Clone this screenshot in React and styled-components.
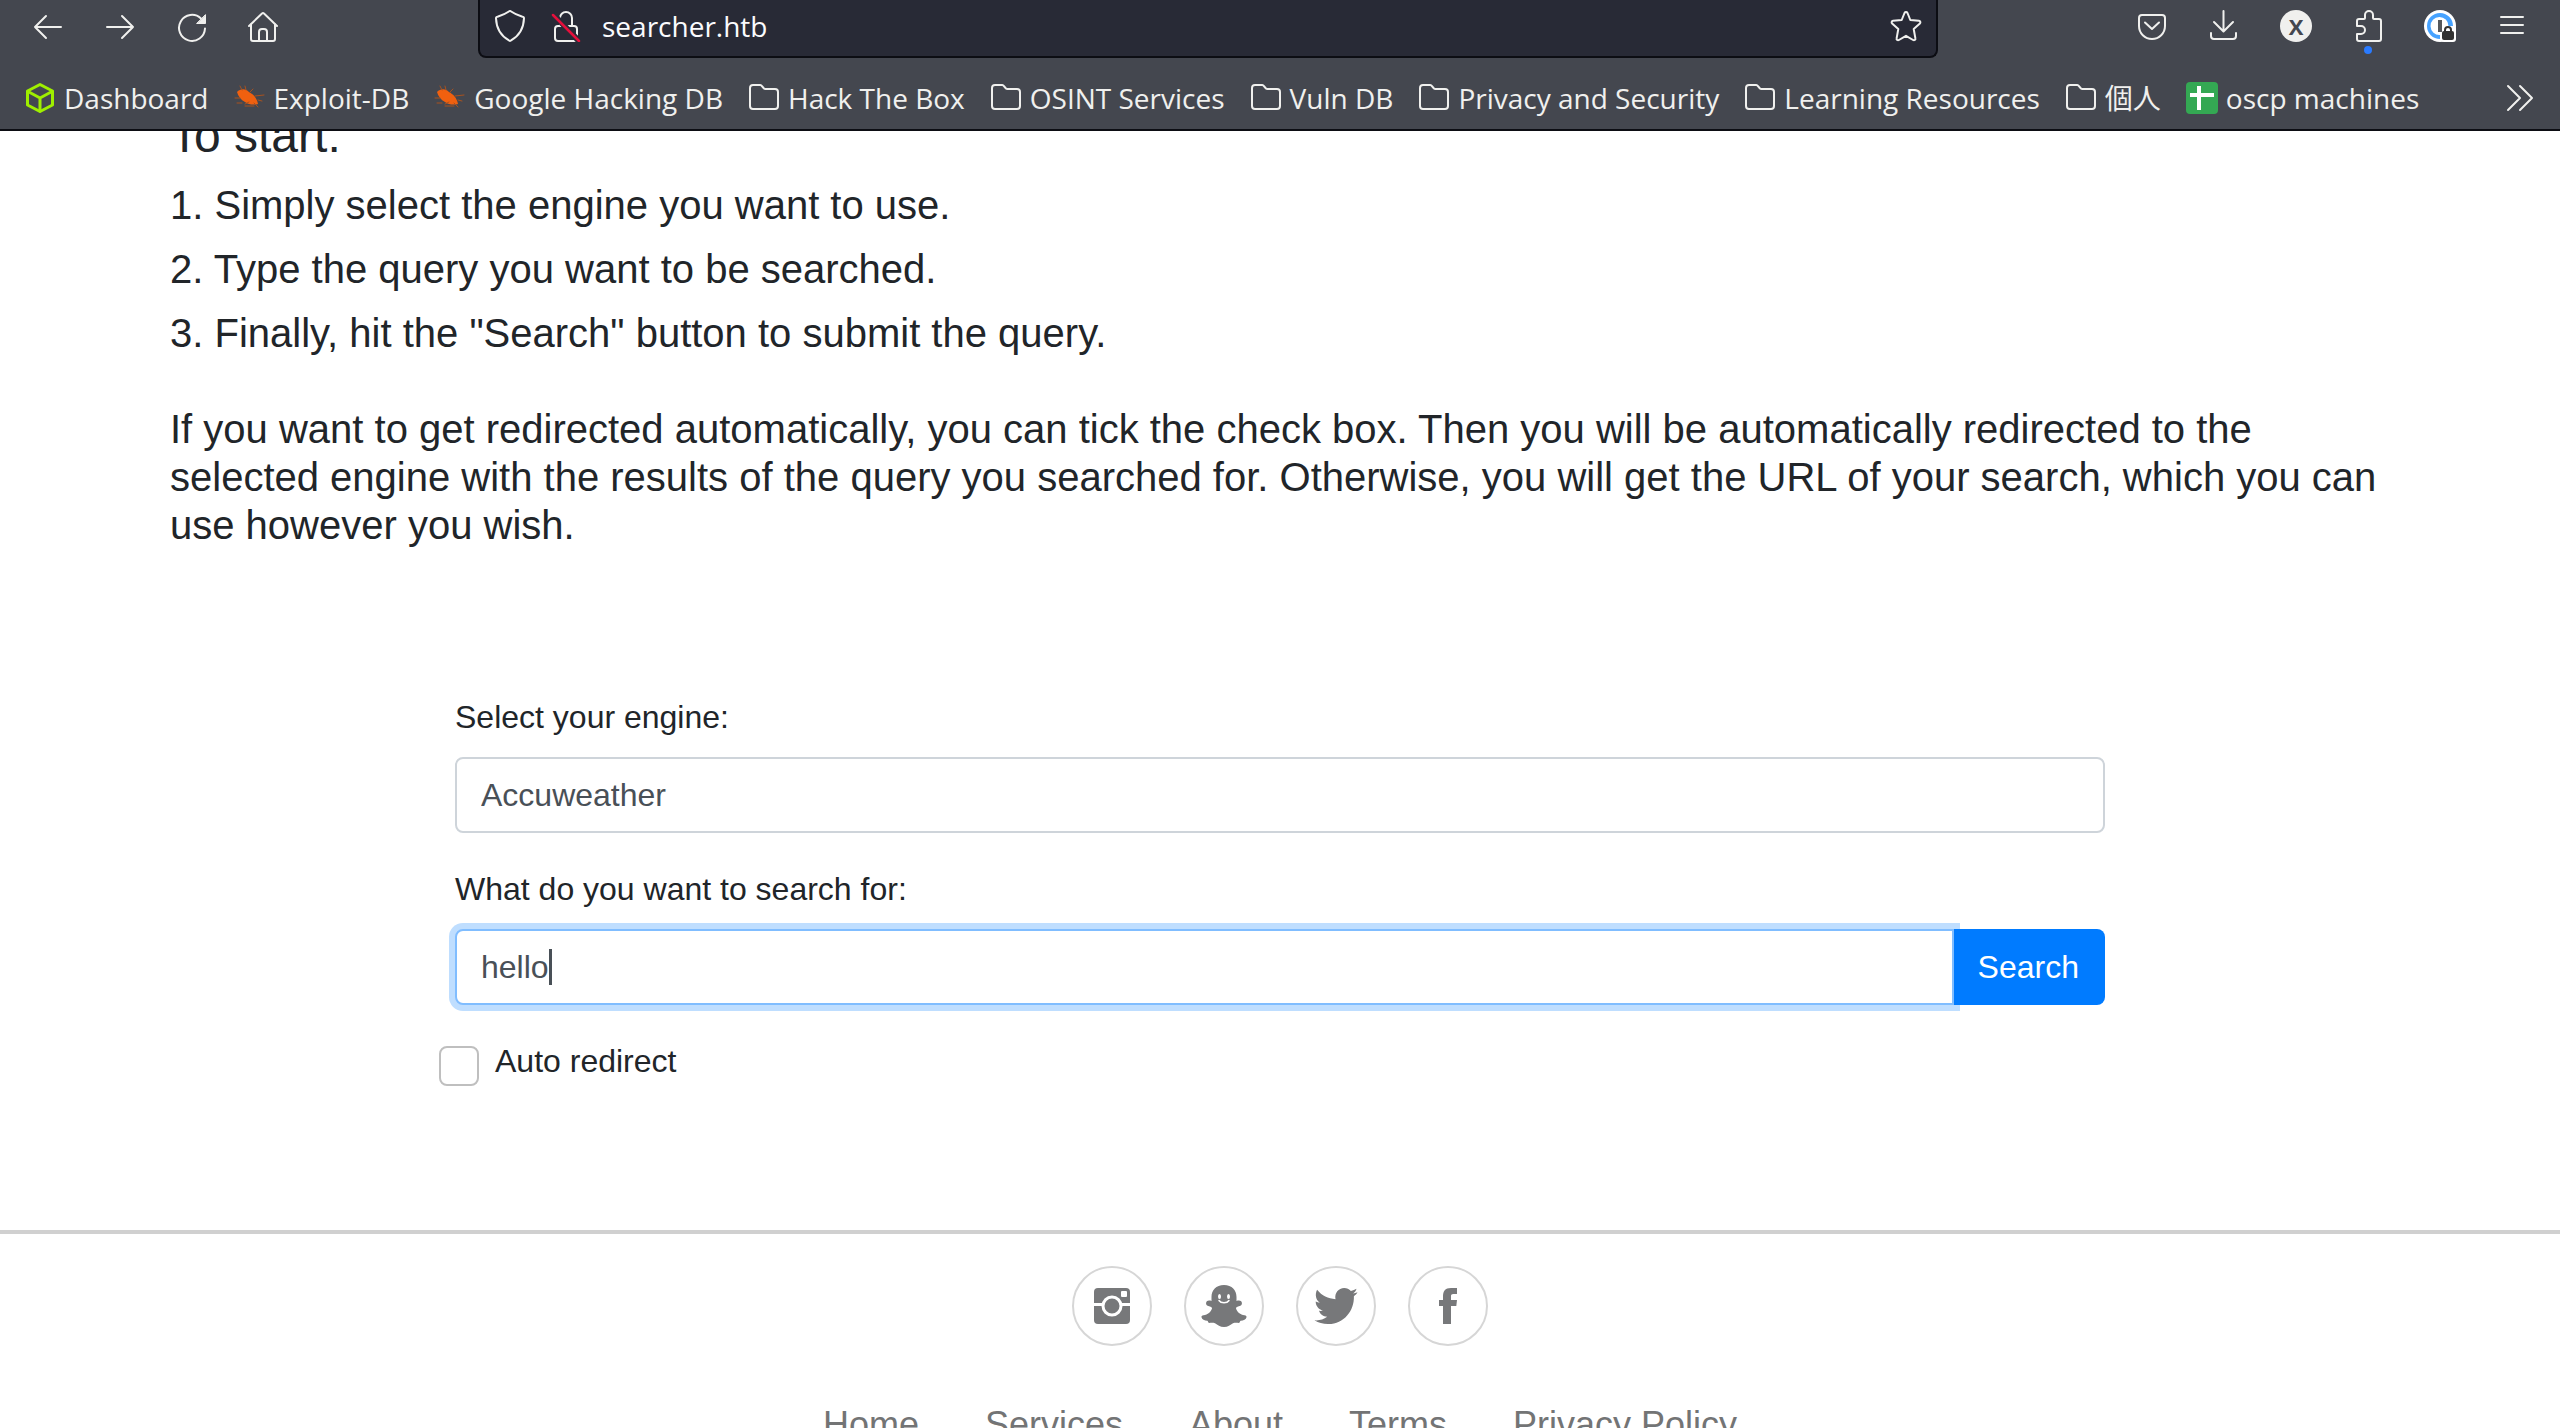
import React, { useState } from "react";
import styled, { createGlobalStyle, css } from "styled-components";

const GlobalStyle = createGlobalStyle`
  *, *::before, *::after { box-sizing: border-box; }
  body {
    margin: 0;
    background: #fff;
    color: #212529;
    font-family: "Liberation Sans", Arial, sans-serif;
    font-size: 32px;
    line-height: 48px;
  }
`;

const Screen = styled.div`
  display: flex;
  flex-direction: column;
  height: 100vh;
  overflow: hidden;
`;

/* Browser chrome */

const Chrome = styled.header`
  flex: none;
  background: #44474f;
  border-bottom: 2px solid #0c0d13;
  color: #f0f0ee;
  font-family: "Open Sans", "Noto Sans", "Noto Sans CJK JP", sans-serif;
  font-size: 28px;
  line-height: 40px;
`;

const Toolbar = styled.div`
  display: flex;
  align-items: flex-start;
  height: 67px;
  padding: 0 12px;
`;

const plainButton = css`
  border: 0;
  padding: 0;
  background: none;
  color: inherit;
  font: inherit;
  cursor: pointer;
`;

const ToolButton = styled.button`
  ${plainButton}
  position: relative;
  display: flex;
  align-items: center;
  justify-content: center;
  width: 72px;
  height: 52px;
`;

const Spacer = styled.div`
  flex: 0 1 178px;
`;

const AddressBar = styled.div`
  flex: 1;
  display: flex;
  align-items: center;
  gap: 24px;
  height: 58px;
  padding: 0 14px 4px;
  border: 2px solid #0c0d13;
  border-top: 0;
  border-radius: 0 0 8px 8px;
  background: #282a36;
`;

const AddressInput = styled.input`
  flex: 1;
  min-width: 0;
  border: 0;
  padding: 0;
  outline: 0;
  background: none;
  color: #fbfbfe;
  font: inherit;
  margin-left: -4px;
`;

const IconButton = styled.button`
  ${plainButton}
  display: flex;
`;

const NotifyDot = styled.span`
  position: absolute;
  left: 32px;
  top: 46px;
  width: 8px;
  height: 8px;
  border-radius: 50%;
  background: #2a7bff;
`;

const Bookmarks = styled.nav`
  display: flex;
  align-items: center;
  gap: 25px;
  height: 62px;
  padding: 0 24px;
`;

const Bookmark = styled.a`
  display: flex;
  align-items: center;
  gap: 8px;
  color: inherit;
  text-decoration: none;
  white-space: nowrap;
`;

const MoreButton = styled(IconButton)`
  margin-left: auto;
`;

const Glyph = styled.svg.attrs({ viewBox: "0 0 32 32", "aria-hidden": true })`
  flex: none;
  display: block;
  width: 32px;
  height: 32px;
  fill: none;
  stroke: currentColor;
  stroke-width: 2;
  stroke-linecap: round;
  stroke-linejoin: round;
`;

const BackIcon = () => <Glyph><path d="M29 17H3M14 6 3 17l11 11" /></Glyph>;
const ForwardIcon = () => <Glyph><path d="M3 17h26M18 6l11 11-11 11" /></Glyph>;
const ReloadIcon = () => (
  <Glyph>
    <path d="M29 18.5a13 13 0 1 1-4-10" />
    <path d="M29.5 5v8.500H21z" fill="currentColor" strokeWidth="1" strokeLinejoin="miter" />
  </Glyph>
);
const HomeIcon = () => (
  <Glyph>
    <path d="M1 16 14 3.500a1.500 1.500 0 0 1 2 0L29 16" />
    <path d="M3 14.500V29a2 2 0 0 0 2 2h20a2 2 0 0 0 2-2V14.500" />
    <path d="M11 31V22a3 3 0 0 1 3-3h2a3 3 0 0 1 3 3v9" />
  </Glyph>
);
const ShieldIcon = () => (
  <Glyph><path d="M15.300 1.200a1.500 1.500 0 0 1 1.400 0C20 3.500 23 5 28.500 6.700a1.500 1.500 0 0 1 1.500 1.600C29.700 18 25 26 16.700 30.700a1.500 1.500 0 0 1-1.400 0C7 26 2.300 18 2 8.300a1.500 1.500 0 0 1 1.500-1.600C9 5 12 3.500 15.300 1.200z" /></Glyph>
);
const InsecureIcon = () => (
  <Glyph>
    <rect x="5" y="16" width="22" height="15" rx="3" />
    <path d="M10 16V8a6 6 0 0 1 12 0v8" />
    <path d="M3 4 29 31" stroke="#282a36" strokeWidth="6" strokeLinecap="butt" />
    <path d="M3 5 29 31" stroke="#e4103c" strokeWidth="2.500" />
  </Glyph>
);
const StarIcon = () => (
  <Glyph><path d="M14.500 3a1.700 1.700 0 0 1 3 0l2.800 7 8.700.8a1.500 1.500 0 0 1 .9 2.600l-6.200 5.600 1.700 9.400a1.500 1.500 0 0 1-2.300 1.600L16 25.800 8.900 30a1.500 1.500 0 0 1-2.300-1.600L8.300 19l-6.200-5.600a1.500 1.500 0 0 1 .9-2.600l8.700-.8z" /></Glyph>
);
const PocketIcon = () => (
  <Glyph>
    <path d="M6 5h20a3 3 0 0 1 3 3v8a13 13 0 0 1-26 0V8a3 3 0 0 1 3-3z" />
    <path d="m9 12.500 7 6.500 7-6.500" />
  </Glyph>
);
const DownloadIcon = () => (
  <Glyph>
    <path d="M15.500 1v20M6 12l9.500 9.500L25 12" />
    <path d="M3 23v3a3 3 0 0 0 3 3h19a3 3 0 0 0 3-3v-3" />
  </Glyph>
);
const PuzzleIcon = () => (
  <Glyph><path d="M7 9h5a1 1 0 0 0 1-1V5a4 4 0 0 1 8 0v3a1 1 0 0 0 1 1h5a2 2 0 0 1 2 2v18a2 2 0 0 1-2 2H7a2 2 0 0 1-2-2v-5h4a4 4 0 0 0 0-8H5v-5a2 2 0 0 1 2-2z" /></Glyph>
);
const PasswordIcon = () => (
  <Glyph>
    <g stroke="none">
      <circle cx="16" cy="16" r="16" fill="#fff" />
      <rect x="17" y="16" width="15" height="16" rx="3" fill="#fff" />
      <path d="M29 16a13 13 0 1 0-13 13v-4a9 9 0 1 1 8.500-9z" fill="#46a2ff" />
      <rect x="14" y="10" width="4" height="12" fill="#55585c" />
      <rect x="18" y="21" width="12" height="9" rx="2" fill="#323232" />
    </g>
    <path d="M21 21.500V20a3 3 0 0 1 6 0v1.500" stroke="#323232" strokeWidth="2" />
  </Glyph>
);
const MenuIcon = () => <Glyph><path d="M5 7h22M5 15h22M5 23h22" /></Glyph>;
const FolderIcon = () => (
  <Glyph><path d="M5 3h7a2 2 0 0 1 1.500.6L16 6.500a2 2 0 0 0 1.500.5H27a3 3 0 0 1 3 3v14a3 3 0 0 1-3 3H5a3 3 0 0 1-3-3V6a3 3 0 0 1 3-3z" /></Glyph>
);
const ChevronsIcon = () => <Glyph><path d="m4 4 12 12L4 28M16 4l12 12-12 12" /></Glyph>;
const CubeIcon = () => (
  <Glyph>
    <g stroke="#9fef00" strokeWidth="3">
      <path d="M16 2.500 28.500 9v14L16 29.500 3.500 23V9z" />
      <path d="M4 9.500 16 16l12-6.500M16 16v13" />
    </g>
  </Glyph>
);
const BugIcon = () => (
  <Glyph>
    <path d="M3 10c3-3 8-4 12 0 4 2 8 6 9 12-4 1-9 1-13-2-4-2-7-6-8-10z" fill="#f0600f" stroke="none" />
    <path d="m8 8-2-4m6 4-1-4m5 6 3-3m2 7 9-1m-6 5 4 1m-8 2 4 4m-9-5-4 2M6 16H1m7 5H3m8 3h9" stroke="#a8521f" strokeWidth="1" />
  </Glyph>
);
const SheetIcon = () => (
  <Glyph>
    <rect width="32" height="32" rx="4" fill="#34a853" stroke="none" />
    <path d="M11 4h4v7h13v4H15v13h-4V15H4v-4h7z" fill="#fff" stroke="none" />
  </Glyph>
);

const RoundBadge = styled.span`
  width: 32px;
  height: 32px;
  border-radius: 50%;
  background: #f0f0ee;
  color: #44474f;
  font-size: 22px;
  font-weight: 700;
  line-height: 32px;
  text-align: center;
`;

const bookmarks = [
  ["Dashboard", CubeIcon],
  ["Exploit-DB", BugIcon],
  ["Google Hacking DB", BugIcon],
  ["Hack The Box", FolderIcon],
  ["OSINT Services", FolderIcon],
  ["Vuln DB", FolderIcon],
  ["Privacy and Security", FolderIcon],
  ["Learning Resources", FolderIcon],
  ["個人", FolderIcon],
  ["oscp machines", SheetIcon],
];

/* Web page */

const Page = styled.main`
  flex: 1;
  min-height: 0;
  overflow: hidden;
`;

const Container = styled.section`
  max-width: 2280px;
  margin: -24px auto 0;
  padding: 0 30px;
`;

const Title = styled.h4`
  margin: 0 0 16px;
  font-size: 48px;
  font-weight: 400;
  line-height: 58px;
`;

const Steps = styled.ol`
  margin: 0 0 48px;
  padding: 0;
  list-style: none;
  font-size: 40px;
`;

const Step = styled.li`
  margin-bottom: 16px;
`;

const Note = styled.p`
  margin: 0 0 144px;
  font-size: 40px;
`;

const Form = styled.form`
  max-width: 1650px;
  margin: 0 auto;
`;

const Field = styled.div`
  margin-bottom: 32px;
`;

const Label = styled.label`
  display: block;
  margin-bottom: 16px;
`;

const control = css`
  width: 100%;
  height: 76px;
  padding: 0 24px;
  border: 2px solid #ced4da;
  border-radius: 8px;
  background: #fff;
  color: #495057;
  font: inherit;
  appearance: none;
`;

const Select = styled.select`
  ${control}
`;

const InputGroup = styled.div`
  display: flex;
`;

const QueryBox = styled.div`
  position: relative;
  flex: 1;
`;

const QueryInput = styled.input`
  ${control}
  display: block;
  border-color: #80bdff;
  border-radius: 8px 0 0 8px;
  outline: 0;
  box-shadow: 0 0 0 6px #bfdeff;
`;

const Caret = styled.span`
  position: absolute;
  left: 94px;
  top: 20px;
  width: 3px;
  height: 36px;
  background: #495057;
`;

const SearchButton = styled.button`
  position: relative;
  height: 76px;
  padding: 0 24px;
  border: 2px solid #007bff;
  border-left: 0;
  border-radius: 0 8px 8px 0;
  background: #007bff;
  color: #fff;
  font: inherit;
`;

const CheckRow = styled.div`
  display: flex;
  gap: 16px;
  margin-left: -16px;
`;

const Checkbox = styled.input`
  appearance: none;
  width: 40px;
  height: 40px;
  margin: 9px 0 0;
  border: 2px solid #bfbfbf;
  border-radius: 8px;
  background: #fff;
`;

const Footer = styled.footer`
  margin-top: 144px;
  padding: 32px 0;
  border-top: 4px solid #d0d0d0;
  color: #77787a;
`;

const Social = styled.div`
  display: flex;
  justify-content: center;
  gap: 32px;
`;

const SocialLink = styled.a`
  display: flex;
  align-items: center;
  justify-content: center;
  width: 80px;
  height: 80px;
  border: 2px solid #d6d6d6;
  border-radius: 50%;
  color: inherit;
`;

const SocialGlyph = styled.svg.attrs({ viewBox: "0 0 48 48", "aria-hidden": true })`
  width: 48px;
  height: 48px;
  fill: currentColor;
`;

const FooterLinks = styled.nav`
  display: flex;
  justify-content: center;
  gap: 66px;
  margin-top: 52px;
  font-size: 36px;
  line-height: 54px;
`;

const FooterLink = styled.a`
  color: #737475;
  text-decoration: none;
  white-space: nowrap;
`;

const Instagram = () => (
  <SocialGlyph>
    <rect x="6" y="6" width="36" height="36" rx="4" />
    <path d="M6 22.500h36" stroke="#fff" strokeWidth="3" />
    <circle cx="24" cy="24" r="9" stroke="#fff" strokeWidth="3" />
    <rect x="33" y="9" width="6" height="6" rx="1" fill="#fff" />
  </SocialGlyph>
);
const Snapchat = () => (
  <SocialGlyph>
    <path d="M24 3c8 0 12.500 5 12.500 12v4c1.500-.6 3.500-.7 4.700.2 1.200 1.300 1 3.800-.8 4.500-1.900.8-4.500 1.300-4.500 2.300 1 4.300 4.500 6.600 8.600 7.200 1.600.2 2.200.8 2 2-.4 2.500-3 3.300-5.800 3.500-.6 0-.8 2-1.700 2.200-2-.2-4-.6-6 .3-2.700 1.500-5 3.800-9 3.800s-6.300-2.300-9-3.800c-2-.9-4-.5-6-.3-.9-.2-1.100-2.200-1.700-2.200-2.800-.2-5.400-1-5.800-3.500-.2-1.200.4-1.800 2-2 4.100-.6 7.600-2.900 8.600-7.200 0-1-2.600-1.500-4.500-2.300-1.800-.7-2-3.200-.8-4.500 1.200-.9 3.200-.8 4.700-.2v-4C11.500 8 16 3 24 3z" />
    <ellipse cx="19.500" cy="14.500" rx="1.500" ry="2.500" fill="#fff" />
    <ellipse cx="28.500" cy="14.500" rx="1.500" ry="2.500" fill="#fff" />
    <path d="M19 18.500c2 3 8 3 10 0" fill="none" stroke="#fff" strokeWidth="1.500" strokeLinecap="round" />
  </SocialGlyph>
);
const Twitter = () => (
  <SocialGlyph>
    <path d="M45.500 10.300c-1 1.800-2 2.700-3.600 3.900.5 14.800-10.300 28.200-26 27.800-5 0-9.400-1-13.400-3.700 4.700.5 9-.8 12.700-3.500-3.900-.1-7-2.500-8.200-6 1.400.2 2.600.1 3.900-.2-4.200-1-7.200-4.500-7.200-9 1.300.7 2.600 1.100 4.100 1.100C4 18 2.600 12.600 5.100 7.800c4.800 5.900 11 9 18.400 9.400C22.400 11 26.500 6 32.200 6c2.700 0 4.900 1 6.700 2.900 2.100-.4 4-1.100 5.600-2.100-.6 2-1.800 3.600-3.400 4.700 1.600-.2 3-.6 4.400-1.200z" />
  </SocialGlyph>
);
const Facebook = () => (
  <SocialGlyph>
    <path d="M19 42V24h-4v-6h4v-3.500C19 9.300 21 6 27 6h6v6h-3.600c-2.300 0-2.400 1-2.400 2.600V18h6l-.7 6H27v18z" />
  </SocialGlyph>
);

const social = [
  ["Instagram", Instagram],
  ["Snapchat", Snapchat],
  ["Twitter", Twitter],
  ["Facebook", Facebook],
];

export default function App() {
  const [query, setQuery] = useState("hello");
  return (
    <Screen>
      <GlobalStyle />
      <Chrome>
        <Toolbar>
          <ToolButton aria-label="Back"><BackIcon /></ToolButton>
          <ToolButton aria-label="Forward"><ForwardIcon /></ToolButton>
          <ToolButton aria-label="Reload"><ReloadIcon /></ToolButton>
          <ToolButton aria-label="Home"><HomeIcon /></ToolButton>
          <Spacer />
          <AddressBar>
            <IconButton aria-label="Tracking protection"><ShieldIcon /></IconButton>
            <IconButton aria-label="Connection not secure"><InsecureIcon /></IconButton>
            <AddressInput aria-label="Address" defaultValue="searcher.htb" />
            <IconButton aria-label="Bookmark this page"><StarIcon /></IconButton>
          </AddressBar>
          <Spacer />
          <ToolButton aria-label="Save to Pocket"><PocketIcon /></ToolButton>
          <ToolButton aria-label="Downloads"><DownloadIcon /></ToolButton>
          <ToolButton aria-label="Account"><RoundBadge>X</RoundBadge></ToolButton>
          <ToolButton aria-label="Extensions"><PuzzleIcon /><NotifyDot /></ToolButton>
          <ToolButton aria-label="Passwords"><PasswordIcon /></ToolButton>
          <ToolButton aria-label="Menu"><MenuIcon /></ToolButton>
        </Toolbar>
        <Bookmarks aria-label="Bookmarks">
          {bookmarks.map(([name, Icon]) => (
            <Bookmark key={name} href="#"><Icon />{name}</Bookmark>
          ))}
          <MoreButton aria-label="More bookmarks"><ChevronsIcon /></MoreButton>
        </Bookmarks>
      </Chrome>
      <Page>
        <Container>
          <Title>To start:</Title>
          <Steps>
            <Step>1. Simply select the engine you want to use.</Step>
            <Step>2. Type the query you want to be searched.</Step>
            <Step>3. Finally, hit the "Search" button to submit the query.</Step>
          </Steps>
          <Note>
            If you want to get redirected automatically, you can tick the check box. Then you will be
            automatically redirected to the selected engine with the results of the query you searched
            for. Otherwise, you will get the URL of your search, which you can use however you wish.
          </Note>
        </Container>
        <Form onSubmit={(event) => event.preventDefault()}>
          <Field>
            <Label htmlFor="engine">Select your engine:</Label>
            <Select id="engine"><option>Accuweather</option></Select>
          </Field>
          <Field>
            <Label htmlFor="query">What do you want to search for:</Label>
            <InputGroup>
              <QueryBox>
                <QueryInput id="query" value={query} onChange={(event) => setQuery(event.target.value)} />
                {query === "hello" && <Caret />}
              </QueryBox>
              <SearchButton type="submit">Search</SearchButton>
            </InputGroup>
          </Field>
          <CheckRow>
            <Checkbox type="checkbox" id="redirect" />
            <label htmlFor="redirect">Auto redirect</label>
          </CheckRow>
        </Form>
        <Footer>
          <Social>
            {social.map(([name, Icon]) => (
              <SocialLink key={name} href="#" aria-label={name}><Icon /></SocialLink>
            ))}
          </Social>
          <FooterLinks>
            {["Home", "Services", "About", "Terms", "Privacy Policy"].map((name) => (
              <FooterLink key={name} href="#">{name}</FooterLink>
            ))}
          </FooterLinks>
        </Footer>
      </Page>
    </Screen>
  );
}
